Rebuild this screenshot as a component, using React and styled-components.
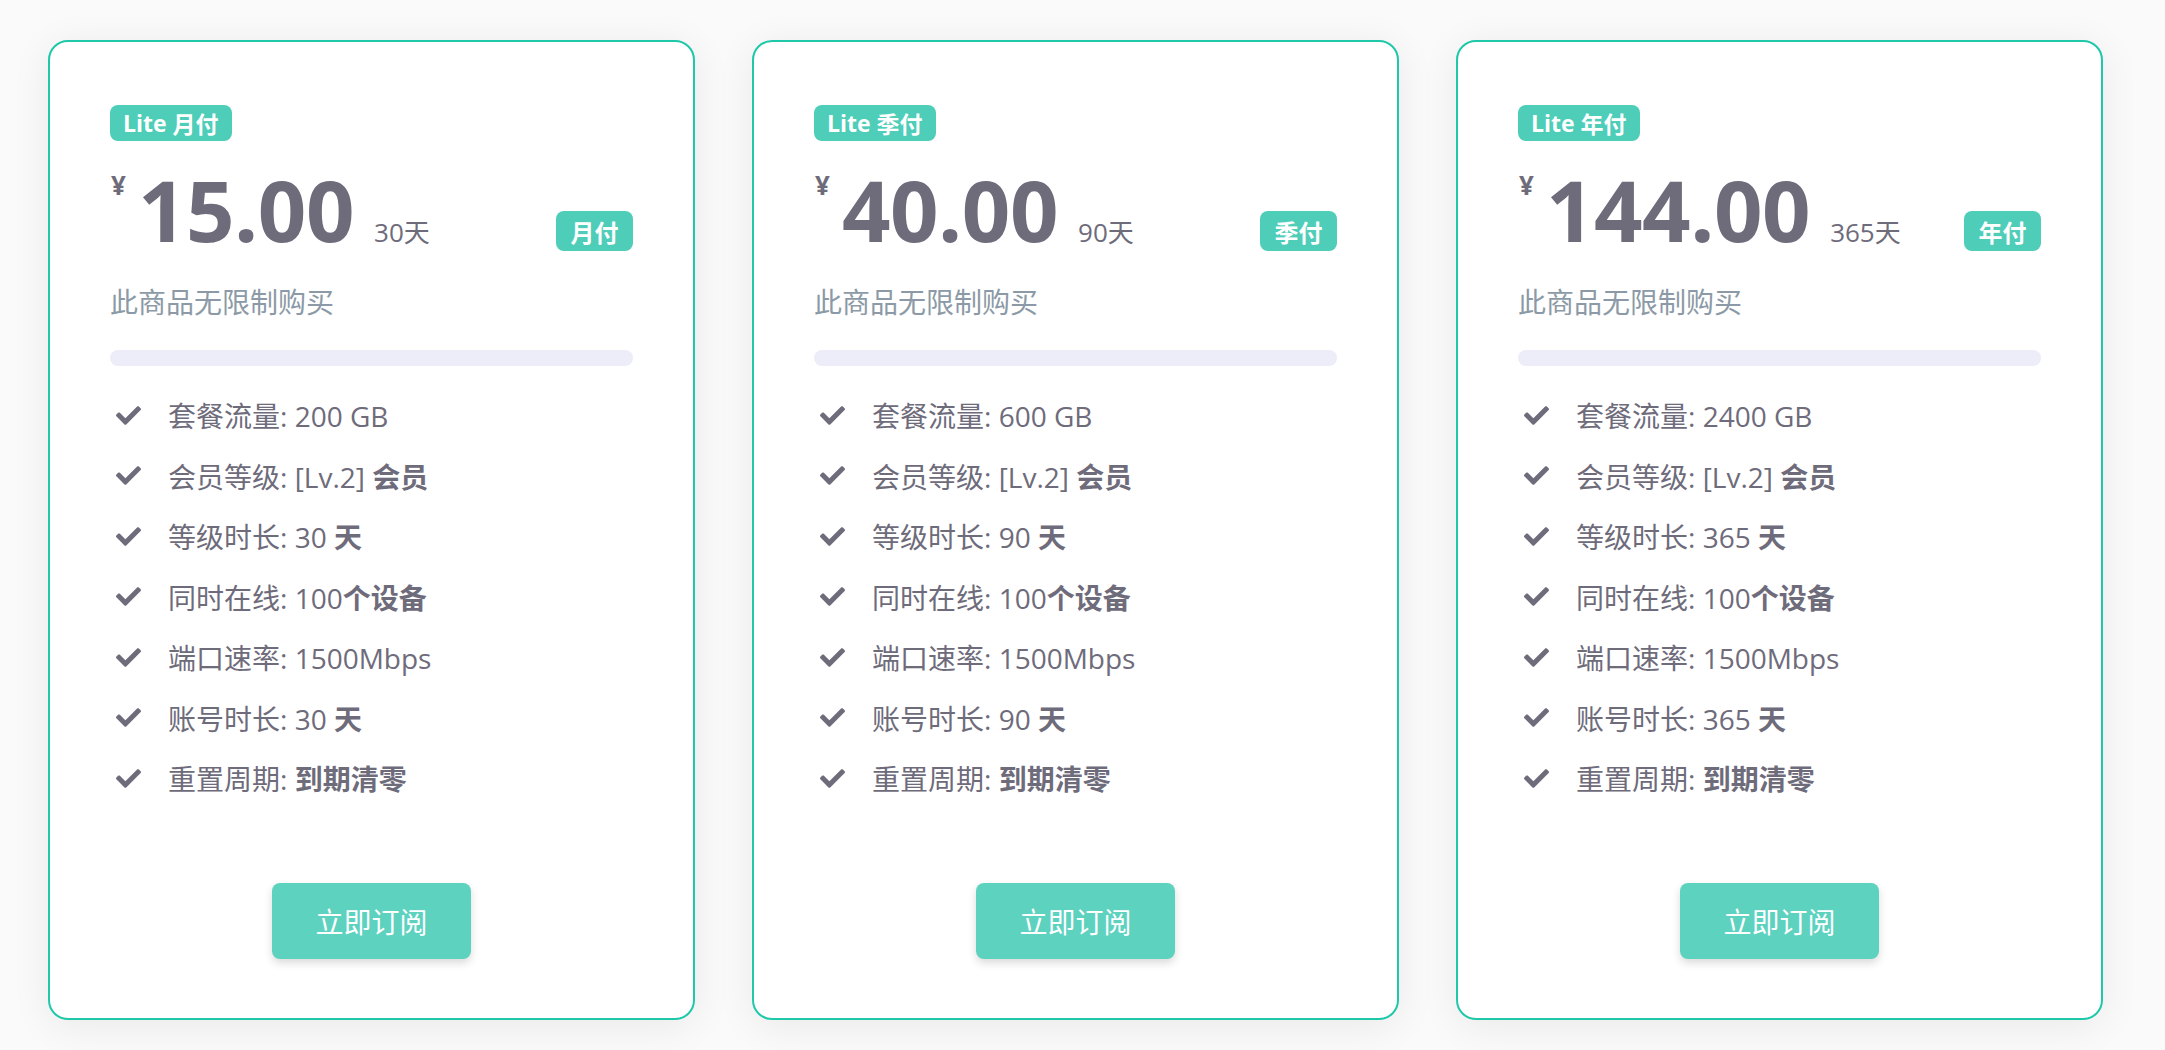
import { FaCheck } from 'react-icons/fa';
import styled, { createGlobalStyle } from 'styled-components';

const GlobalStyle = createGlobalStyle`
  body{
    margin: 0;
    background: #fafafa;
    font-family: "Open Sans", "Noto Sans CJK SC", sans-serif;
  }
`;

const Plans = styled.div`
  display: grid;
  grid-template-columns: repeat(3, 647px);
  column-gap: 57px;
  padding: 40px 0 30px 48px;
`;

const Card = styled.div`
  box-sizing: border-box;
  height: 980px;
  display: flex;
  flex-direction: column;
  padding: 63px 60px 59px;
  background: #fff;
  border: 2px solid #1ec8a9;
  border-radius: 20px;
  box-shadow: 0 6px 40px rgba(0, 0, 0, 0.07);
  color: #6e6b7b;
`;

const Tag = styled.span`
  align-self: flex-start;
  display: inline-flex;
  align-items: center;
  height: 36px;
  padding: 0 13px;
  border-radius: 8px;
  background: #4ecdb8;
  color: #fff;
  font-size: 23px;
  font-weight: 700;
  .zh{
    margin-left: 6px;
  }
`;

const PriceRow = styled.div`
  display: flex;
  align-items: flex-end;
  justify-content: space-between;
  margin-top: 26px;
`;

const PriceGroup = styled.div`
  display: flex;
  align-items: baseline;
`;

const Yen = styled.span`
  align-self: flex-start;
  margin: 5px 12px 0 1px;
  font-size: 26px;
  font-weight: 700;
  line-height: 1;
`;

const Amount = styled.span`
  font-size: 85px;
  font-weight: 700;
  line-height: 1;
  letter-spacing: -0.5px;
`;

const Period = styled.span`
  margin-left: 20px;
  font-size: 26px;
  line-height: 1;
`;

const PayTag = styled.span`
  display: inline-flex;
  align-items: center;
  justify-content: center;
  width: 77px;
  height: 40px;
  margin-bottom: 1px;
  border-radius: 8px;
  background: #4ecdb8;
  color: #fff;
  font-size: 24px;
  font-weight: 700;
`;

const Note = styled.p`
  margin: 31px 0 0;
  font-size: 28px;
  line-height: 39px;
  color: #8b9aa6;
`;

const Bar = styled.div`
  height: 16px;
  margin-top: 28px;
  border-radius: 8px;
  background: #ededf9;
`;

const Features = styled.ul`
  list-style: none;
  margin: 19px 0 0;
  padding: 0;
`;

const Feature = styled.li`
  display: flex;
  align-items: center;
  height: 60.5px;
  font-size: 28px;
  .icon{
    width: 25px;
    height: 25px;
    margin: 0 27px 0 6px;
    flex-shrink: 0;
  }
  b{
    font-weight: 700;
  }
`;

const SubscribeButton = styled.button`
  align-self: center;
  margin-top: auto;
  width: 199px;
  height: 76px;
  border: none;
  border-radius: 8px;
  background: #5dd2bf;
  color: #fff;
  font-family: inherit;
  font-size: 28px;
  box-shadow: 0 4px 8px rgba(0, 0, 0, 0.15);
  cursor: pointer;
`;

const plans = [
  { cycle: '月付', price: '15.00', days: 30, traffic: 200 },
  { cycle: '季付', price: '40.00', days: 90, traffic: 600 },
  { cycle: '年付', price: '144.00', days: 365, traffic: 2400 },
];

const PlanCard = ({ plan }) => {
  const rows = [
    <>套餐流量: {plan.traffic} GB</>,
    <>会员等级: [Lv.2] <b>会员</b></>,
    <>等级时长: {plan.days} <b>天</b></>,
    <>同时在线: 100<b>个设备</b></>,
    <>端口速率: 1500Mbps</>,
    <>账号时长: {plan.days} <b>天</b></>,
    <>重置周期: <b>到期清零</b></>,
  ];

  return (
    <Card>
      <Tag>Lite<span className="zh">{plan.cycle}</span></Tag>
      <PriceRow>
        <PriceGroup>
          <Yen>¥</Yen>
          <Amount>{plan.price}</Amount>
          <Period>{plan.days}天</Period>
        </PriceGroup>
        <PayTag>{plan.cycle}</PayTag>
      </PriceRow>
      <Note>此商品无限制购买</Note>
      <Bar />
      <Features>
        {rows.map((row, i) => (
          <Feature key={i}>
            <FaCheck className="icon" />
            <span>{row}</span>
          </Feature>
        ))}
      </Features>
      <SubscribeButton>立即订阅</SubscribeButton>
    </Card>
  );
};

const App = () => {
  return (
    <>
      <GlobalStyle />
      <Plans>
        {plans.map((plan) => (
          <PlanCard key={plan.cycle} plan={plan} />
        ))}
      </Plans>
    </>
  );
};

export default App;
